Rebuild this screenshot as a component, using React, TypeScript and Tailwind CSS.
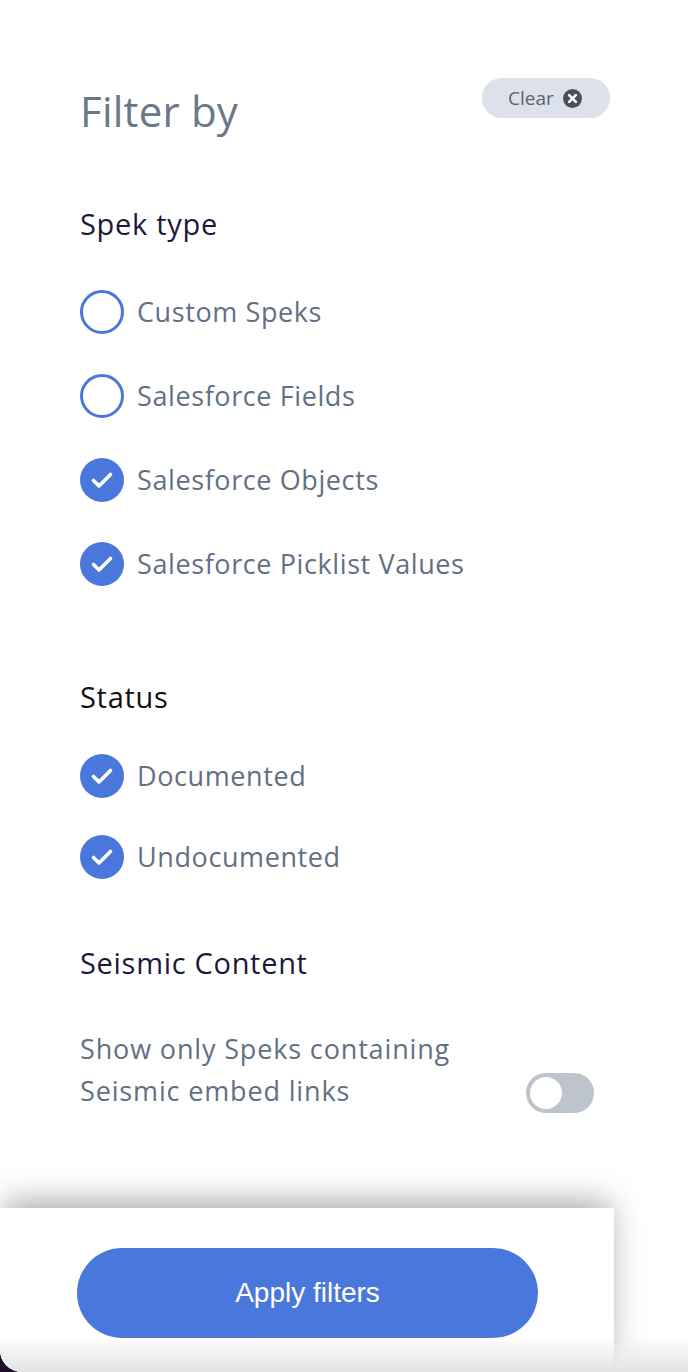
import React from "react";

function Box({ checked }: { checked: boolean }) {
  if (checked) {
    return (
      <svg width="44" height="44" viewBox="0 0 44 44" className="shrink-0">
        <circle cx="22" cy="22" r="22" fill="#4a77dc" />
        <path d="M13.5 22.5 L19 28 L30.5 16.5" fill="none" stroke="#fff" strokeWidth="3.6" strokeLinecap="round" strokeLinejoin="round" />
      </svg>
    );
  }
  return (
    <svg width="44" height="44" viewBox="0 0 44 44" className="shrink-0">
      <circle cx="22" cy="22" r="20.5" fill="#fff" stroke="#4a77dc" strokeWidth="3" />
    </svg>
  );
}

function Item({ label, checked }: { label: string; checked: boolean }) {
  return (
    <div className="flex items-center gap-[13px] h-[44px]">
      <Box checked={checked} />
      <span className="text-[27px] leading-[36px] text-[#627084] tracking-[0.6px]">{label}</span>
    </div>
  );
}

export default function App() {
  return (
    <div className="w-[688px] h-[1372px] bg-[#1d0c2c] overflow-hidden" style={{ fontFamily: '"Open Sans", "Noto Sans", sans-serif' }}>
      <div className="relative w-full h-full bg-white rounded-bl-[22px] overflow-hidden flex flex-col">
        <div className="flex-1 pt-[78px] pl-[80px] pr-[78px]">
          <div className="flex items-start justify-between">
            <h1 className="mt-[8px] text-[42px] leading-[50px] text-[#6b7888] font-normal tracking-[0.2px]">Filter by</h1>
            <button className="h-[40px] w-[128px] rounded-full bg-[#dde1ec] flex items-center justify-center gap-[9px] pr-[2px] text-[19px] text-[#5a6270]">
              <span>Clear</span>
              <svg width="19" height="19" viewBox="0 0 20 20">
                <circle cx="10" cy="10" r="10" fill="#4a4f5a" />
                <path d="M6.5 6.5 L13.5 13.5 M13.5 6.5 L6.5 13.5" stroke="#fff" strokeWidth="2.8" strokeLinecap="round" />
              </svg>
            </button>
          </div>

          <h2 className="mt-[70px] text-[29px] leading-[36px] text-[#1b1a3d] tracking-[0.7px]">Spek type</h2>
          <div className="mt-[48px] flex flex-col gap-[40px]">
            <Item label="Custom Speks" checked={false} />
            <Item label="Salesforce Fields" checked={false} />
            <Item label="Salesforce Objects" checked />
            <Item label="Salesforce Picklist Values" checked />
          </div>

          <h2 className="mt-[93px] text-[29px] leading-[36px] text-[#111111] tracking-[0.7px]">Status</h2>
          <div className="mt-[39px] flex flex-col gap-[37px]">
            <Item label="Documented" checked />
            <Item label="Undocumented" checked />
          </div>

          <h2 className="mt-[66px] text-[29px] leading-[36px] text-[#1b1a3d] tracking-[0.7px]">Seismic Content</h2>
          <div className="mt-[47px] flex items-end justify-between pr-[16px]">
            <p className="text-[27px] leading-[42px] text-[#627084] tracking-[0.85px]">
              <span className="block">Show only Speks containing</span>
              <span className="block">Seismic embed links</span>
            </p>
            <div className="w-[68px] h-[40px] rounded-full bg-[#bec4cb] p-[4px] flex items-center -mb-[1px]">
              <div className="w-[32px] h-[32px] rounded-full bg-white" />
            </div>
          </div>
        </div>

        <div className="w-[614px] h-[164px] bg-white pt-[40px] pl-[77px] shadow-[0_-10px_30px_-4px_rgba(0,0,0,0.35)] z-10">
          <button className="w-[461px] h-[90px] rounded-full bg-[#4a77dc] text-white text-[28px]" style={{ fontFamily: '"Liberation Sans", Arial, sans-serif' }}>
            Apply filters
          </button>
        </div>

        <div className="pointer-events-none absolute left-0 right-0 bottom-0 h-[36px] bg-gradient-to-b from-transparent to-[#e4e4e4] z-20" />
      </div>
    </div>
  );
}
